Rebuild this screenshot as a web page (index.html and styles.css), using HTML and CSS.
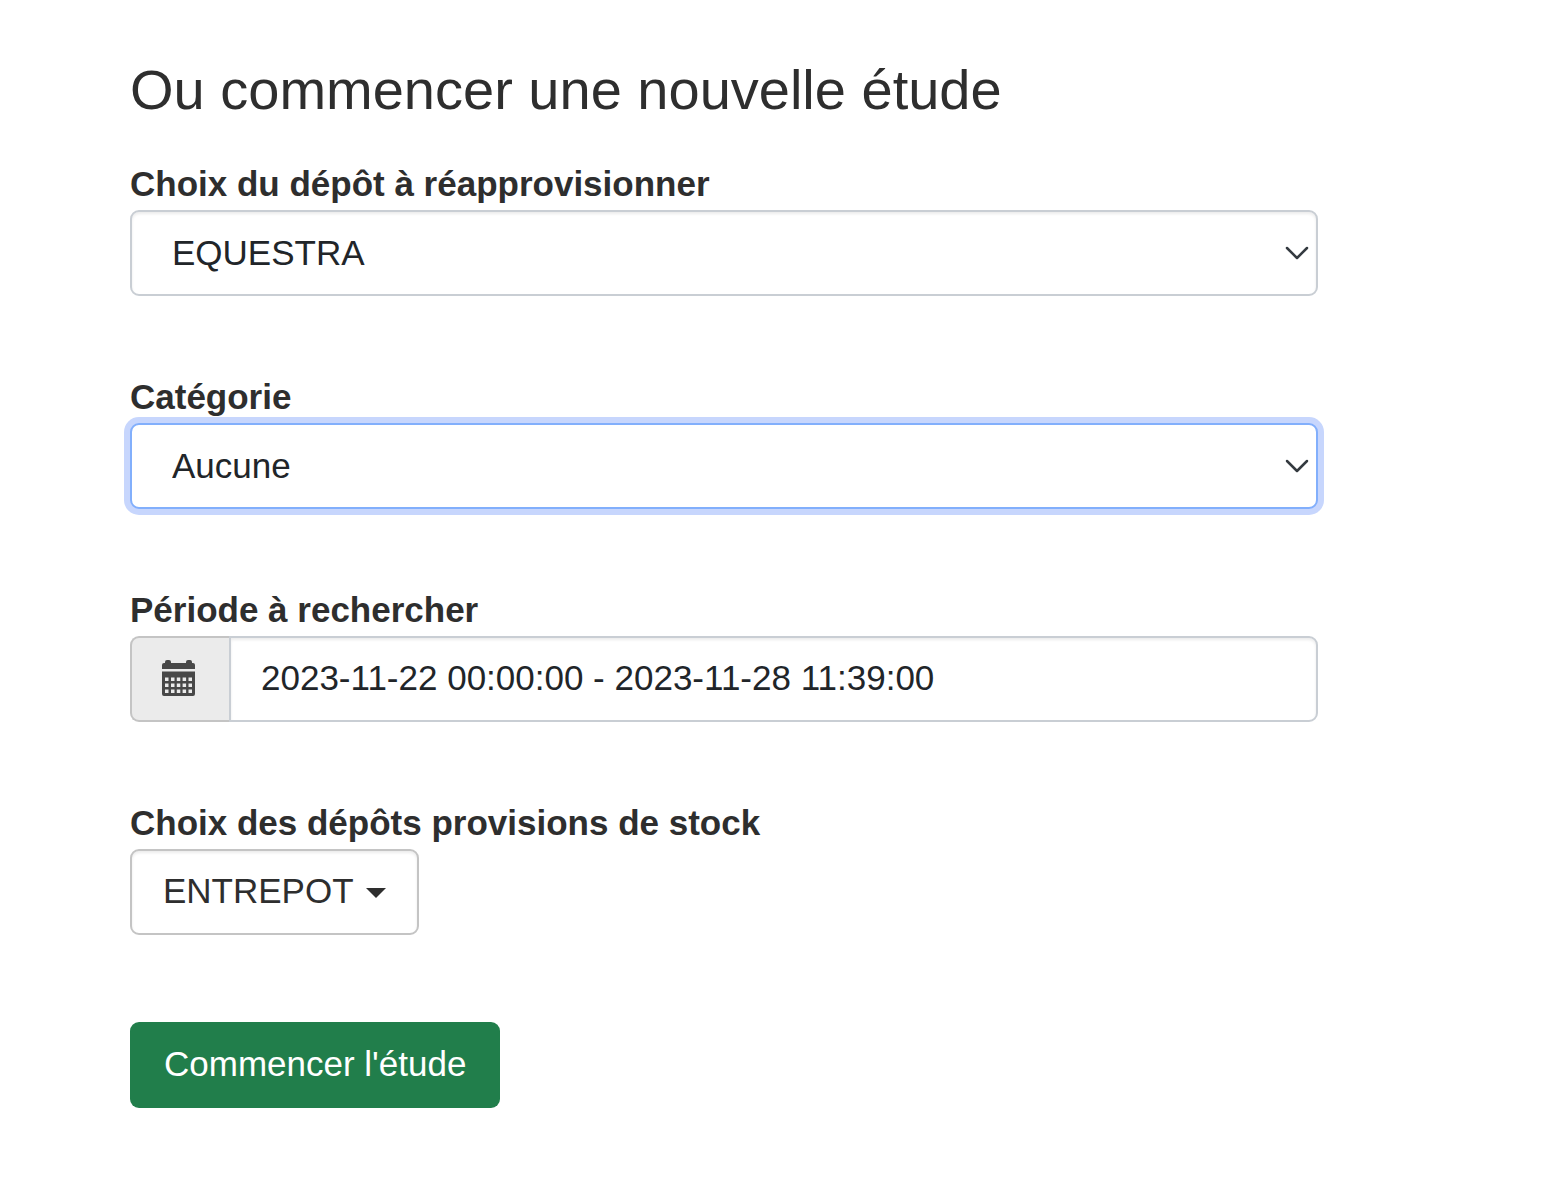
FILE: index.html
```html
<!DOCTYPE html>
<html lang="fr">
<head>
<meta charset="utf-8">
<meta name="viewport" content="width=device-width, initial-scale=1">
<title>Nouvelle étude</title>
<link rel="stylesheet" href="styles.css">
</head>
<body>
<main class="page">
  <h1 class="title">Ou commencer une nouvelle étude</h1>
  <form class="form">
    <div class="field">
      <label class="label" for="depot">Choix du dépôt à réapprovisionner</label>
      <div class="select">
        <select class="control" id="depot"><option>EQUESTRA</option></select>
        <svg class="chevron" viewBox="0 0 24 14" aria-hidden="true"><path d="M2 2l10 10L22 2"/></svg>
      </div>
    </div>
    <div class="field">
      <label class="label" for="categorie">Catégorie</label>
      <div class="select">
        <select class="control control-active" id="categorie"><option>Aucune</option></select>
        <svg class="chevron" viewBox="0 0 24 14" aria-hidden="true"><path d="M2 2l10 10L22 2"/></svg>
      </div>
    </div>
    <div class="field">
      <label class="label" for="periode">Période à rechercher</label>
      <div class="group">
        <span class="addon">
          <svg class="calendar" viewBox="0 0 33 36" aria-hidden="true">
            <path d="M0 9V5q0-2 2-2h1V2q0-2 2-2h2q2 0 2 2v1h15V2q0-2 2-2h2q2 0 2 2v1h1q2 0 2 2v4z"/>
            <path fill-rule="evenodd" d="M0 11.500h33V34q0 2-2 2H2q-2 0-2-2zM3 17.500v3.500h3.500v-3.500zM9 17.500v3.500h3.500v-3.500zM14.800 17.500v3.500h3.500v-3.500zM20.600 17.500v3.500h3.500v-3.500zM26.500 17.500v3.500H30v-3.500zM3 23.500V27h3.500v-3.500zM9 23.500V27h3.500v-3.500zM14.800 23.500V27h3.500v-3.500zM20.600 23.500V27h3.500v-3.500zM26.500 23.500V27H30v-3.500zM3 29.500V33h3.500v-3.500zM9 29.500V33h3.500v-3.500zM14.800 29.500V33h3.500v-3.500zM20.600 29.500V33h3.500v-3.500zM26.500 29.500V33H30v-3.500z"/>
          </svg>
        </span>
        <input class="control control-input" id="periode" type="text" value="2023-11-22 00:00:00 - 2023-11-28 11:39:00">
      </div>
    </div>
    <div class="field">
      <label class="label" for="stock">Choix des dépôts provisions de stock</label>
      <button class="dropdown" id="stock" type="button">ENTREPOT<span class="caret"></span></button>
    </div>
    <button class="submit" type="submit">Commencer l'étude</button>
  </form>
</main>
</body>
</html>
```
FILE: styles.css
```css
* {
  box-sizing: border-box;
}

body {
  margin: 0;
  background: #fff;
  color: #2e2e2e;
  font-family: "Liberation Sans", Arial, sans-serif;
  font-size: 35px;
}

.page {
  padding: 60px 224px 60px 130px;
}

.title {
  margin: 0 0 44px;
  font-size: 56px;
  font-weight: 400;
  line-height: 60px;
}

.form {
  display: flex;
  flex-direction: column;
  align-items: flex-start;
}

.field {
  display: flex;
  flex-direction: column;
  align-items: flex-start;
  width: 100%;
  margin-bottom: 81px;
}

.label {
  margin-bottom: 6px;
  font-weight: 700;
  line-height: 40px;
}

.select {
  position: relative;
  width: 100%;
}

.control {
  display: block;
  width: 100%;
  height: 86px;
  padding: 0 80px 2px 40px;
  border: 2px solid #c9ced4;
  border-radius: 9px;
  background: #fff;
  box-shadow: inset 0 2px 3px rgba(0, 0, 0, 0.08);
  color: #212529;
  font: inherit;
  appearance: none;
  outline: none;
}

.control-active {
  border-color: #82affc;
  box-shadow: 0 0 0 6px #c7d6fd;
}

.chevron {
  position: absolute;
  top: 36px;
  right: 9px;
  width: 24px;
  height: 14px;
  fill: none;
  stroke: #343a40;
  stroke-width: 2.5;
  stroke-linecap: round;
  stroke-linejoin: round;
  pointer-events: none;
}

.group {
  display: flex;
  width: 100%;
}

.addon {
  display: flex;
  flex: none;
  align-items: center;
  width: 99px;
  padding: 0 0 2px 30px;
  border: 2px solid #c4c4c4;
  border-right: 0;
  border-radius: 9px 0 0 9px;
  background: #ebebeb;
}

.calendar {
  width: 33px;
  height: 36px;
  fill: #484848;
}

.control-input {
  flex: 1;
  min-width: 0;
  padding: 0 30px 2px;
  border-radius: 0 9px 9px 0;
}

.dropdown,
.submit {
  display: flex;
  align-items: center;
  height: 86px;
  border-radius: 9px;
  font: inherit;
  cursor: pointer;
}

.dropdown {
  gap: 12px;
  padding: 0 31px 2px;
  border: 2px solid #c4c4c4;
  background: #fff;
  box-shadow: inset 0 2px 3px rgba(0, 0, 0, 0.08);
  color: #2e2e2e;
}

.caret {
  margin-top: 4px;
  border: 10px solid transparent;
  border-top-color: #2e2e2e;
  border-bottom: 0;
}

.submit {
  margin-top: 6px;
  padding: 0 34px 2px;
  border: 0;
  background: #217e4b;
  color: #fff;
}
```
